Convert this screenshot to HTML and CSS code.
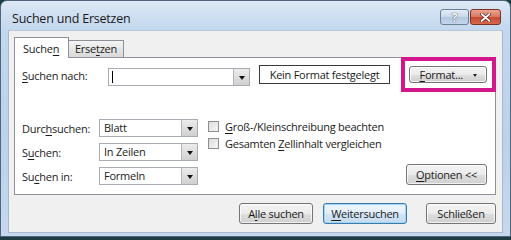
FILE: index.html
```html
<!DOCTYPE html>
<html lang="de">
<head>
  <meta charset="UTF-8">
  <title>Suchen und Ersetzen</title>
  <link rel="stylesheet" href="styles.css">
</head>
<body>

  <div class="window">
    <!-- Titelleiste -->
    <div class="titlebar">
      <span class="title">Suchen und Ersetzen</span>
      <div class="caption-buttons">
        <span class="cap-btn help">?</span>
        <span class="cap-btn close">
          <svg width="11" height="9" viewBox="0 0 11 9">
            <path d="M1.5 1 L9.5 8 M9.5 1 L1.5 8" stroke="#5a1a10" stroke-width="3.2" stroke-linecap="round"/>
            <path d="M1.5 1 L9.5 8 M9.5 1 L1.5 8" stroke="#fff" stroke-width="1.8" stroke-linecap="round"/>
          </svg>
        </span>
      </div>
    </div>

    <div class="client">
      <div class="tabs">
        <div class="tab active">Suche<u>n</u></div>
        <div class="tab">Erse<u>t</u>zen</div>
      </div>

      <div class="panel">
        <div class="find-row">
          <span class="find-label"><u>S</u>uchen nach:</span>
          <div class="combo find-combo">
            <span class="value"><span class="caret"></span></span>
            <span class="drop"></span>
          </div>
          <div class="format-preview">Kein Format festgelegt</div>
          <button class="btn format-btn"><u>F</u>ormat... <span class="mini-arrow"></span></button>
        </div>

        <div class="options">
          <div class="option-grid">
            <span>Durc<u>h</u>suchen:</span>
            <div class="combo"><span class="value">Blatt</span><span class="drop"></span></div>
            <span>S<u>u</u>chen:</span>
            <div class="combo"><span class="value">In Zeilen</span><span class="drop"></span></div>
            <span>Su<u>c</u>hen in:</span>
            <div class="combo"><span class="value">Formeln</span><span class="drop"></span></div>
          </div>

          <div class="checks">
            <div class="check"><span class="box"></span><span><u>G</u>roß-/Kleinschreibung beachten</span></div>
            <div class="check"><span class="box"></span><span>Gesamten <u>Z</u>ellinhalt vergleichen</span></div>
          </div>

          <button class="btn options-btn"><u>O</u>ptionen &lt;&lt;</button>
        </div>
      </div>

      <div class="actions">
        <button class="btn all-btn">A<u>l</u>le suchen</button>
        <button class="btn default next-btn"><u>W</u>eitersuchen</button>
        <button class="btn close-btn">Schließen</button>
      </div>
    </div>

    <!-- Markierung um den Format-Button -->
    <div class="highlight"></div>
  </div>

</body>
</html>
```

FILE: styles.css
```css
body {
  margin: 0;
  background-color: #1d3d44;
  font-family: "Open Sans", "Noto Sans", sans-serif;
  font-size: 11px;
  letter-spacing: -0.25px;
  color: #1b1b1b;
}
u {
  text-decoration-thickness: 1px;
  text-underline-offset: 2px;
}
.window {
  position: relative;
  box-sizing: border-box;
  width: 511px;
  height: 237px;
  border: 1px solid #51667c;
  border-radius: 7px 7px 0 0;
  background: linear-gradient(#dce8f5, #c3d7ee 28px, #bcd2eb 60%, #c5d8ee);
  padding: 0 7px 3px 7px;
  display: flex;
  flex-direction: column;
}
.titlebar {
  height: 29px;
  display: flex;
  align-items: flex-start;
  justify-content: space-between;
}
.title {
  margin: 9px 0 0 4px;
  font-size: 12.5px;
  letter-spacing: -0.2px;
  color: #1a1a1a;
}
.caption-buttons {
  display: flex;
  margin: 8px 2px 0 0;
}
.cap-btn {
  box-sizing: border-box;
  height: 16px;
  border: 1px solid #6b7f96;
  border-radius: 3px;
  display: flex;
  align-items: center;
  justify-content: center;
}
.help {
  width: 29px;
  margin-right: 1px;
  background: linear-gradient(#e4edf7, #c9d8ea 50%, #b3c7df 51%, #c4d6ec);
  color: #f4f8fc;
  font-weight: bold;
  font-size: 12px;
  text-shadow: 0 0 1px #3e5168, 0 0 1px #3e5168;
}
.close {
  width: 31px;
  border-color: #7b3325;
  background: linear-gradient(#eba491, #d87760 50%, #c44a31 51%, #d9694c);
}
.client {
  flex: 1;
  background-color: #f0f0f0;
  border: 1px solid #a7b8cd;
  border-top-color: #b8c8da;
  padding: 6px 6px 0 5px;
  display: flex;
  flex-direction: column;
}
.tabs {
  display: flex;
  align-items: flex-end;
  height: 20px;
}
.tab {
  box-sizing: border-box;
  width: 55px;
  height: 17px;
  border: 1px solid #8d9099;
  border-bottom: none;
  border-left: none;
  background: linear-gradient(#f4f4f4, #e6e6e6 50%, #dadada);
  padding-left: 6px;
  line-height: 16px;
}
.tab.active {
  width: 55px;
  height: 21px;
  border-left: 1px solid #8d9099;
  background: #fff;
  margin-bottom: -1px;
  position: relative;
  z-index: 1;
  padding-left: 8px;
  line-height: 21px;
}
.panel {
  box-sizing: border-box;
  height: 138px;
  background: #fff;
  border: 1px solid #8d9099;
  padding: 7px 8px 9px 7px;
  display: flex;
  flex-direction: column;
}
.find-row {
  display: flex;
  align-items: flex-start;
  height: 22px;
}
.find-label {
  width: 86px;
  line-height: 22px;
}
.combo {
  box-sizing: border-box;
  height: 18px;
  border: 1px solid #a9abb2;
  background: #fff;
  display: flex;
}
.combo .value {
  flex: 1;
  padding-left: 4px;
  line-height: 16px;
}
.drop {
  width: 15px;
  border-left: 1px solid #b5b5b5;
  background: linear-gradient(#ececec, #d0d0d0);
  display: flex;
  align-items: center;
  justify-content: center;
}
.drop::after {
  content: "";
  border-left: 3px solid transparent;
  border-right: 3px solid transparent;
  border-top: 4px solid #111;
  margin-top: 1px;
}
.find-combo {
  width: 142px;
  margin-top: 3px;
}
.caret {
  display: inline-block;
  width: 1px;
  height: 12px;
  background: #000;
  margin: 2px 0 0 -1px;
  vertical-align: top;
}
.format-preview {
  box-sizing: border-box;
  width: 131px;
  height: 19px;
  margin-left: 9px;
  border: 1px solid #3a3a3a;
  text-align: center;
  line-height: 17px;
}
.btn {
  box-sizing: border-box;
  font-family: inherit;
  font-size: 11px;
  letter-spacing: -0.25px;
  color: #1b1b1b;
  height: 21px;
  padding: 0;
  border: 1px solid #757575;
  border-radius: 3px;
  background: linear-gradient(#f3f3f3, #ebebeb 50%, #dedede 51%, #d0d0d0);
  box-shadow: inset 0 0 0 1px rgba(255, 255, 255, 0.7);
}
.format-btn {
  width: 78px;
  height: 17px;
  margin: 1px 0 0 19px;
  line-height: 14px;
}
.mini-arrow {
  display: inline-block;
  margin-left: 7px;
  border-left: 2.5px solid transparent;
  border-right: 2.5px solid transparent;
  border-top: 3px solid #222;
  vertical-align: middle;
}
.options {
  margin-top: auto;
  display: flex;
  align-items: flex-start;
}
.option-grid {
  display: grid;
  grid-template-columns: 77px 99px;
  grid-auto-rows: 18px;
  row-gap: 6px;
  align-items: center;
}
.checks {
  margin: 2px 0 0 10px;
  display: flex;
  flex-direction: column;
  gap: 6px;
}
.check {
  display: flex;
  align-items: center;
  gap: 6px;
  height: 11px;
}
.box {
  box-sizing: border-box;
  width: 11px;
  height: 11px;
  border: 1px solid #8f8f8f;
  background: linear-gradient(135deg, #dcdcdc, #f6f6f6);
}
.options-btn {
  width: 81px;
  margin-left: auto;
  align-self: flex-end;
}
.actions {
  display: flex;
  justify-content: flex-end;
  margin-top: 8px;
}
.all-btn {
  width: 74px;
}
.next-btn {
  width: 84px;
  margin-left: 10px;
}
.close-btn {
  width: 70px;
  margin-left: 19px;
}
.btn.default {
  border-color: #3d7bad;
  box-shadow: inset 0 0 0 1px #9fd5f5;
  background: linear-gradient(#eef6fc, #e1eef9 50%, #d2e5f5 51%, #c5dcef);
}
.highlight {
  position: absolute;
  left: 400px;
  top: 56px;
  width: 95px;
  height: 35px;
  box-sizing: border-box;
  border: 4px solid #d3168c;
}
```
